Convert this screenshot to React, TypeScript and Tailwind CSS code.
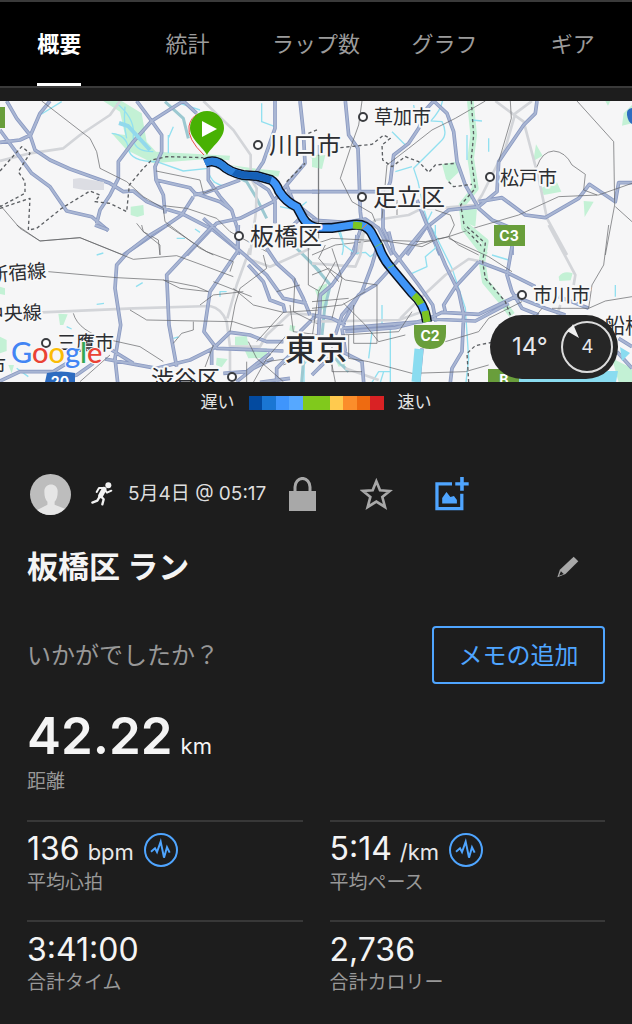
import type { ReactNode } from "react";

interface Tile {
  at: string;
  parks: string;
  banks?: string;
  water: string;
  rivers?: string;
  grey: string;
  roads: string;
  rail: string;
  border: string;
}

interface Place {
  name: string;
  x: number;
  y: number;
  size: number;
  dot?: [number, number];
  rotate?: number;
}

const TABS = ["概要", "統計", "ラップ数", "グラフ", "ギア"];

const PACE_COLORS = [
  "bg-[#034a9f]",
  "bg-[#1a76d3]",
  "bg-[#3f95fc]",
  "bg-[#56a8ff]",
  "bg-[#80c91c]",
  "bg-[#80c91c]",
  "bg-[#ffca4e]",
  "bg-[#fb8d2b]",
  "bg-[#ee6b11]",
  "bg-[#d92224]",
];

const STATS = [
  { value: "136", unit: "bpm", label: "平均心拍", chart: true },
  { value: "5:14", unit: "/km", label: "平均ペース", chart: true },
  { value: "3:41:00", label: "合計タイム" },
  { value: "2,736", label: "合計カロリー" },
];

const TILES: Tile[] = [
  {
    at: "translate(0 -16) scale(0.33333)",
    parks:
      "M310 48H365L425 85 440 170 468 200 690 212 688 226 620 222 460 235 380 195 335 145 375 150 360 80ZM690 240L760 250 840 258 835 275 760 262ZM392 365L430 360 432 390 412 396 392 390ZM930 215L960 208V245Z",
    water:
      "M350 55Q405 100 400 150T460 200M335 145Q380 150 385 190T470 230L550 258 625 250M375 65Q370 120 380 160M505 150V205M520 125L505 160M185 50L120 90M540 55L600 75M785 55V110L825 125M625 260Q640 310 690 300M840 365L890 375 920 350M640 290L670 305",
    rivers: "M495 50L550 100 565 160M640 240L740 290 770 340 800 400",
    grey: "M360 48L330 90 240 150 190 190 90 205 0 228M610 48L700 135 752 210V280L770 310 768 380 750 510",
    roads:
      "M20 48L50 100 90 150 105 195 150 225 210 252 330 295 370 320 400 318 440 350 490 370 550 388 640 435 720 500M150 48L120 85 92 150 60 165 0 172M0 135L95 265 150 305 200 378 275 395 325 437M550 48L455 108 400 170 355 230V280L330 330 300 375 290 415M410 48L455 108 485 150V200L465 245 468 285 490 330 495 385M468 285L570 308 585 325 660 350 695 375 712 430 715 510M550 48L590 85M370 510L545 390 580 335 M580 330L620 322 720 285M560 510L650 415 720 400 820 350 860 300 915 235 910 140 900 48M625 240V285L660 335 695 375M825 48V130L790 230 770 260M760 285L805 315 825 350V415M860 320H960M860 300L880 350 950 405M850 450L900 400",
    rail: "M125 48L270 160 290 200 300 250 380 290 430 335 490 370 495 410 600 490M468 258L600 285 610 325 650 310M0 360L60 430 120 468 240 458 370 510M490 362L560 370 650 400 690 440 800 500M410 415L430 440 475 465 480 510M955 180V410M600 490L640 510",
    border:
      "M0 258L65 185 90 205 55 260 75 290V325L0 365M0 370L90 340 85 435 110 430 185 370 270 318 300 330 285 350 330 355 380 380 388 300 430 250 455 225 500 215 610 218M860 290L915 235M925 145L955 133",
  },
  {
    at: "translate(312 -16) scale(0.33333)",
    parks:
      "M390 238L435 230 440 262 412 288 425 305 402 282ZM672 178L692 212 664 228ZM688 308L735 292 748 320 695 330ZM815 348L845 350 818 396ZM0 215L40 210 30 252 0 246ZM935 85L960 60V115L930 122ZM450 370H495L490 425 455 410ZM880 48H895L888 62Z",
    banks: "M475 48L485 150 476 220 490 310 450 360 458 430 520 510",
    water:
      "M305 60L312 105 390 110Q410 150 385 170L340 215 305 250 318 290 335 370 350 420 380 510M478 105L510 108M530 160V200M465 150V225M355 110Q400 60 390 30M240 140L280 180M250 260L300 245M85 440Q100 480 90 510M360 380L340 420",
    grey: "M550 48L600 85 635 110 680 280 705 400 765 510M660 48L610 85 580 190 510 330 490 360 400 368 330 370 290 390 190 405 150 450 135 510",
    roads:
      "M100 48L110 150 138 190 145 380 150 420 120 510M365 48L345 70 320 130 290 175 245 210 235 290 213 350V430L232 470M365 48L405 85 425 140 435 230 460 300 500 370 540 405 600 430V510M675 48L670 85 635 120 560 230 555 320 500 365 410 375 340 430 285 510M500 350L570 338 640 390 700 398 800 340 832 298 910 350 920 293H960M0 320H240M315 345L345 420 385 510M0 405L100 412 160 402 200 430 240 510",
    rail: "M795 48L905 170 908 360 880 510M520 48L430 100 360 135 290 190 225 240 210 400M150 48L140 120 115 190 85 280 120 350 180 385 190 410M675 245Q690 200 725 198 760 200 780 240L820 268 815 315 855 330M410 455L500 425 620 390 740 335 860 330 960 295M595 48L598 100 560 230M370 375L415 390 427 420 410 455 310 480M20 210V470M0 510L70 480 200 465 340 470 410 455M910 365L960 410M255 345V390M410 455L440 480 500 510",
    border:
      "M85 188L180 178 215 150 235 160 210 180 212 225 240 245 280 215 320 230 350 262 370 240 430 235M410 290L425 305 480 298M478 48L485 150 478 220 490 310 446 360 458 430 520 495",
  },
  {
    at: "translate(0 124) scale(0.33333)",
    parks:
      "M175 266L203 268 190 300H180ZM705 335L740 333 746 360 705 362ZM735 378L800 370 802 398 745 400ZM650 398L683 402 665 427 648 420ZM870 300L886 303 882 322 868 316ZM0 335L20 345V378L0 385ZM25 420H42L35 445ZM0 185L15 190V210L0 207ZM945 195L960 190V235Z",
    water:
      "M290 90L310 84M408 185L428 173M290 238L312 235M520 340L535 336M585 12L600 22M530 40H555M660 215V200H680M200 305L215 312M50 430L85 455M912 472V420L925 400",
    rivers: "M885 65L960 140M905 472L912 390",
    grey: "M125 262L400 250 630 243Q665 250 680 290L690 365V440M750 70L710 180 682 280M690 365H780L800 330 870 265 950 270M740 100L810 125 900 85 930 70",
    roads:
      "M500 0L450 30 385 80 350 120 345 190 362 300 345 400 353 472M640 0L500 150 507 300 530 425M610 -20L660 25 740 95 800 150 850 220 920 235M715 0L712 80 630 200 612 320 650 370 780 375 850 378M0 468L60 440 160 440 200 415M150 472L230 450 280 415 M315 402L470 430 570 405 640 370 690 322 750 330 800 350H850M335 375L400 415M635 420V370M670 445L740 440 810 385M800 70L830 115 880 160 910 220 930 270M745 120L790 170 810 225 850 240 855 262M710 470L760 430 820 400M830 472V430L870 390M900 320L950 270M780 472L870 460M285 0L325 15",
    rail: "M145 140L350 158 490 165 590 185 625 200M50 0L120 48 240 38 400 103 530 92 620 125 700 155M390 255L440 285 700 290M220 265Q235 320 330 345L420 365 490 410M500 0L560 40 620 80 700 110 690 140M690 320L705 240 720 190 800 130 790 90M580 290V315L545 325 520 355M700 190L760 240 850 262 960 255M600 240L640 210 730 200M240 470L330 390M870 240L880 320 960 330M760 472L800 400 860 330M745 350L770 400 850 470M885 160L880 260 960 300M480 90V60L430 20 425 0M640 170L755 215M850 262L770 350M700 290L760 310 850 300M830 200L900 180M490 165L540 190 625 200M640 360L610 440M800 410L870 400M925 60V180L960 200M740 410V472M850 420L940 380",
    border: "",
  },
  {
    at: "translate(312 124) scale(0.33333)",
    parks:
      "M740 155Q755 135 782 145L776 166 742 168ZM20 185L45 175 48 240 20 262ZM900 400L960 430V472H920ZM66 395L85 385 100 420 80 425Z",
    banks: "M460 0L520 50 510 110 520 170 570 230 600 270",
    water:
      "M360 10L420 130 460 250 470 400 462 472M80 20L95 60 130 85 160 82 175 95 200 75 210 60M300 145L345 125 340 95 370 70V0M910 180V215M180 472L200 440H235M170 400L180 320M210 240V300M205 472L215 440M235 472V300M540 90L590 105",
    rivers: "M0 115L55 180 38 250 30 330M70 400L110 440",
    grey: "M710 0L790 150 785 180M265 280L330 215 400 150 470 102 510 110 660 180M0 290L260 285 330 260M155 20L145 90 130 125 0 115M745 240L735 270M100 430L200 465",
    roads:
      "M135 30L130 80 60 180 25 210 20 330M345 0L250 115 190 180 140 210 90 300M200 50L180 120 150 200 90 270 70 330M230 20L245 80 320 180 362 240 372 290M90 310L330 290 390 262 500 268 590 225 620 210M100 320L250 308 350 282 490 288 590 235M350 0L400 120 440 200 455 270 450 380 420 430 415 472M500 110L430 185 395 240 400 260M500 110L580 140 670 185M600 65L585 150 600 200 630 250 680 270M610 215L700 250 760 270M740 215L830 250M920 340L960 365M330 370L320 472M0 450L40 410 90 370M90 380L150 410 155 472M0 270L60 280 100 300M90 310L100 380M915 380L960 430",
    rail: "M890 0L875 120 840 180 830 250 720 250M830 250L880 228 960 215M0 60L60 40 220 48 330 65 380 40M95 235L160 300 200 350 280 330M125 240V355H195V180L100 165M400 350L500 320 530 280 630 230M170 410L300 445 460 440 530 420M690 250L650 300M0 250L90 240 160 200M0 230L110 220M60 70L90 160 60 280M110 330V400L170 410M0 340L20 200 70 110M0 150L50 130 100 165M90 330L260 320 300 260M410 40L530 95 600 140M40 60L20 100 80 170M0 400L60 420 70 472M60 350V440L150 440",
    border: "M465 5L520 55 512 110 520 160 580 230 595 270M470 472L465 385 490 362 540 352",
  },
];

const PLACES: Place[] = [
  { name: "川口市", x: 269, y: 53, size: 24, dot: [258, 44] },
  { name: "草加市", x: 374, y: 23, size: 19, dot: [363, 16] },
  { name: "足立区", x: 373, y: 105, size: 24, dot: [362, 96] },
  { name: "松戸市", x: 500, y: 84, size: 19, dot: [490, 76] },
  { name: "板橋区", x: 250, y: 144, size: 24, dot: [239, 135] },
  { name: "新宿線", x: -10, y: 181, size: 19, rotate: -5 },
  { name: "中央線", x: -15, y: 220, size: 19, rotate: -2 },
  { name: "三鷹市", x: 57, y: 249, size: 19, dot: [46, 242] },
  { name: "市", x: -13, y: 272, size: 19 },
  { name: "渋谷区", x: 151, y: 286, size: 23, dot: [232, 276] },
  { name: "東京", x: 285, y: 259, size: 31 },
  { name: "市川市", x: 533, y: 201, size: 19, dot: [522, 194] },
  { name: "船橋市", x: 604, y: 232, size: 21 },
];

const ROUTE =
  "M205 62Q214 58 222 64 229 71 243 74L257 75 271 79Q276 82 279 90 286 101 297 106L303 117Q308 126 319 127L332 127 352 124Q365 122 371 131L379 146Q383 158 392 168L412 192Q425 203 427 221";

function RouteMap() {
  return (
    <svg
      viewBox="0 0 632 281"
      preserveAspectRatio="xMidYMid slice"
      className="block h-full w-full bg-[#f6f6f7]"
      role="img"
      aria-label="ルート"
      fill="none"
    >
      {TILES.map((t) => (
        <g key={t.at} transform={t.at} strokeLinejoin="round">
          <path d={t.parks} fill="#c3f1d5" />
          {t.banks && <path d={t.banks} stroke="#c3f1d5" strokeWidth="20" />}
          <path d={t.water} stroke="#92e0f0" strokeWidth="4" />
          {t.rivers && <path d={t.rivers} stroke="#9cc9d1" strokeWidth="9" />}
          <path d={t.grey} stroke="#d3d5d9" strokeWidth="8" />
          <path d={t.roads} stroke="#8b9ac2" strokeWidth="11" />
          <path d={t.roads} stroke="#a9b6d3" strokeWidth="6" />
          <path d={t.rail} stroke="#5c5d61" strokeWidth="2" />
          <path d={t.border} stroke="#5c5f63" strokeWidth="4" strokeDasharray="10 8" />
        </g>
      ))}

      <path d="M73 78L80 77 104 81V89L84 89 73 87Z" fill="#dcdde3" />
      <path d="M119 22L128 25 140 38 150 49" stroke="#92d9ec" strokeWidth="4" />
      <path d="M419 248L416 281" stroke="#8adcf0" strokeWidth="9" />
      <path d="M519 270H618L616 281H519ZM620 246L630 252 622 260Z" fill="#8adcf0" />

      <path d={ROUTE} stroke="#0b1220" strokeWidth="10" />
      <path d={ROUTE} stroke="#3f95f8" strokeWidth="7" />
      <path d="M205 62Q214 58 222 64 229 71 243 74" stroke="#2c80dc" strokeWidth="7" />
      <path d="M234 71Q238 74 257 75L271 79" stroke="#1560b8" strokeWidth="7" />
      <path d="M353 124L362 125M414 194Q419 199 421 203M425 210L427 221" stroke="#7cc522" strokeWidth="7" />
      <path d="M362 128L367 123" stroke="#d98a3a" strokeWidth="1" />
      <path d="M375 146L382 142M388 167L394 164" stroke="#6fbf5a" strokeWidth="1" />

      {PLACES.map((p) => (
        <g key={p.name}>
          {p.dot && (
            <circle cx={p.dot[0]} cy={p.dot[1]} r="4" fill="#fff" stroke="#3a3c40" strokeWidth="2" />
          )}
          <text
            x={p.x}
            y={p.y}
            fontSize={p.size}
            transform={p.rotate ? `rotate(${p.rotate} ${p.x} ${p.y})` : undefined}
            fontWeight={p.size > 30 ? 500 : 400}
            fill="#2b2d31"
            stroke="#f8f8f8"
            strokeWidth="4"
            strokeLinejoin="round"
            paintOrder="stroke"
          >
            {p.name}
          </text>
        </g>
      ))}

      {/* route shields */}
      <path
        d="M0 6H5V27H0ZM494 124H525V145H494ZM414 224H446V232Q446 248 430 248 414 248 414 232ZM488 268H519V281H488Z"
        fill="#699e3b"
      />
      <path d="M47 272Q61 269 75 272V281H45Z" fill="#2e6cc0" />
      <path d="M632 7Q626 8 627 14 628 21 632 23Z" fill="#2e6cc0" />
      <g fill="#fff" fontSize="14" fontWeight="700" textAnchor="middle">
        <text x="509" y="140">C3</text>
        <text x="430" y="240">C2</text>
        <text x="504" y="284">B</text>
        <text x="60" y="286">20</text>
      </g>

      {/* start pin */}
      <path d="M204 54Q187 38 189 25 191 16 198 13" stroke="#ec4a4a" strokeWidth="1" />
      <path
        d="M207 54C203 46 190 38 190 27A17 17 0 0 1 224 27C224 38 211 46 207 54Z"
        fill="#48b103"
      />
      <path d="M202 20L217 28 202 36Z" fill="#fff" />

      <text x="11" y="262" fontSize="29" fontFamily="Lato, sans-serif" fontWeight="500" stroke="#f8f8f8" strokeWidth="2" paintOrder="stroke">
        <tspan fill="#4285f4">G</tspan>
        <tspan fill="#ea4335">o</tspan>
        <tspan fill="#fbbc05">o</tspan>
        <tspan fill="#4285f4">g</tspan>
        <tspan fill="#34a853">l</tspan>
        <tspan fill="#ea4335">e</tspan>
      </text>
    </svg>
  );
}

function WeatherBadge() {
  return (
    <div className="absolute right-3.5 bottom-[3px] flex h-16 w-32 items-center justify-between rounded-full bg-[#262626] pr-1 pl-[22px]">
      <span className="text-2xl text-gray-200">14°</span>
      <div className="relative flex size-[53px] items-center justify-center text-[19px] text-gray-200">
        <svg viewBox="0 0 53 53" className="absolute inset-0" fill="none">
          <circle cx="26" cy="26" r="25" stroke="#dcdcdc" strokeWidth="2" />
          <path d="M6 10L18 17 12 3Q10 8 6 10Z" fill="#f0f0f0" />
        </svg>
        <span>4</span>
      </div>
    </div>
  );
}

function WaveIcon() {
  return (
    <svg viewBox="0 0 102 102" className="size-[34px]" fill="none" stroke="#4fa5ff">
      <circle cx="51" cy="51" r="48" strokeWidth="6" />
      <path d="M21 56L33 46 39 57 50 26 60 74 69 43 77 59" strokeWidth="6" />
    </svg>
  );
}

function RunnerIcon() {
  return (
    <svg
      viewBox="0 0 70 78"
      className="h-[26px] w-6"
      fill="none"
      stroke="#f2f2f2"
      strokeWidth="7"
      strokeLinejoin="round"
      strokeLinecap="round"
    >
      <circle cx="54" cy="13" r="9" fill="#f2f2f2" stroke="none" />
      <path d="M41 25L31 44" strokeWidth="15" />
      <path d="M38 21L26 21 19 33M43 26L50 35 63 29" strokeWidth="6" />
      <path d="M31 45L40 55 36 70M28 47L21 59 6 65" />
    </svg>
  );
}

function Value({ children }: { children: ReactNode }) {
  return <span className="text-[32px] leading-9 text-[#f4f4f4]">{children}</span>;
}

export default function App() {
  return (
    <div
      lang="ja"
      className="min-h-screen overflow-hidden bg-[#1d1d1d] font-['Inter','Noto_Sans_CJK_JP',sans-serif] text-[#f4f4f4]"
    >
      <nav className="border-y-2 border-[#3a3a3a] bg-black">
        <div className="-mx-[5px] grid grid-cols-5">
          {TABS.map((tab, i) => (
            <a
              key={tab}
              href="#"
              aria-current={i === 0 ? "page" : undefined}
              className={
                i === 0
                  ? "mx-auto flex h-[84px] items-center border-b-3 border-white pt-[3px] text-[22px] font-bold text-white"
                  : "mx-auto flex h-[84px] items-center text-[22px] text-[#9b9b9b]"
              }
            >
              {tab}
            </a>
          ))}
        </div>
      </nav>

      <section className="relative mt-[13px] h-[281px]">
        <RouteMap />
        <WeatherBadge />
      </section>

      <div className="flex h-10 items-center justify-center gap-3.5 pt-0.5 text-[17px] text-[#e4e4e4]">
        <span>遅い</span>
        <div className="flex h-[14px] w-[135px]">
          {PACE_COLORS.map((color, i) => (
            <div key={i} className={`flex-1 ${color}`} />
          ))}
        </div>
        <span>速い</span>
      </div>

      <main className="px-[27px]">
        <div className="mt-12 flex h-12 items-center">
          <svg viewBox="0 0 40 40" className="ml-[3px] size-[41px]">
            <circle cx="20" cy="20" r="20" fill="#bdbdbd" />
            <path
              d="M14 17C14 8 27 8 27 17 27 22 26 25 24 27V30L34 34Q28 40 20 40 12 40 7 35L17 30V27C15 25 14 22 14 17Z"
              fill="#e6e6e6"
            />
          </svg>
          <div className="ml-[19px]">
            <RunnerIcon />
          </div>
          <span className="ml-3.5 text-[19px] text-[#dedede]">5月4日 @ 05:17</span>
          <button aria-label="公開設定" className="ml-[23px]">
            <svg viewBox="0 0 27 34" className="h-[34px] w-[27px]">
              <path d="M6 15V10A7 8 0 0 1 21 10V15" fill="none" stroke="#a8a8a8" strokeWidth="3" />
              <path d="M0 14H27V34H0Z" fill="#a8a8a8" />
            </svg>
          </button>
          <button aria-label="お気に入り" className="ml-11">
            <svg viewBox="0 0 99 99" className="size-[33px]">
              <path
                d="M49 10L60 37 89 39 67 57 75 87 49 71 23 87 31 57 9 39 38 37Z"
                fill="none"
                stroke="#a8a8a8"
                strokeWidth="8"
              />
            </svg>
          </button>
          <button aria-label="写真を追加" className="ml-[42px]">
            <svg viewBox="0 0 102 104" className="h-[34px] w-[34px]" fill="#4fa5ff">
              <path d="M0 16H51V26H10V92H76V51H86V102H0ZM76 0H87V16H102V26H87V42H76V26H61V16H76Z" />
              <path d="M21 64L34 46 46 61 57 58 66 70V81H21Z" />
            </svg>
          </button>
        </div>

        <div className="mt-6 flex h-[50px] items-center justify-between pr-[26px]">
          <h1 className="text-[31px] font-bold">板橋区 ラン</h1>
          <button aria-label="タイトルを編集">
            <svg viewBox="0 0 62 62" className="size-[22px]">
              <path d="M47 2L60 15 24 51 1 60 8 39Z" fill="#a8a8a8" />
              <path d="M11 43L19 51 6 56Z" fill="#1d1d1d" />
            </svg>
          </button>
        </div>

        <div className="mt-[34px] flex h-[58px] items-center justify-between">
          <p className="pt-0.5 text-[24px] text-[#989898]">いかがでしたか？</p>
          <button className="h-[58px] w-[173px] rounded border-2 border-[#4fa5ff] pt-0.5 text-[24px] text-[#4fa5ff]">
            メモの追加
          </button>
        </div>

        <div className="mt-6 h-28">
          <div className="flex items-baseline gap-2">
            <span className="text-[51px] leading-[56px] font-semibold">42.22</span>
            <span className="text-[22px]">km</span>
          </div>
          <p className="mt-1 text-[19px] leading-7 text-[#989898]">距離</p>
        </div>

        <dl className="grid grid-cols-2 gap-x-[27px]">
          {STATS.map((s) => (
            <div key={s.label} className="flex h-[100px] flex-col-reverse justify-end border-t-2 border-[#383838] pt-2.5">
              <dt className="mt-px text-[19px] leading-7 text-[#989898]">{s.label}</dt>
              <dd className="flex h-9 items-center gap-2.5">
                <div className="flex items-baseline gap-2">
                  <Value>{s.value}</Value>
                  {s.unit && <span className="text-[22px] text-[#e8e8e8]">{s.unit}</span>}
                </div>
                {s.chart && <WaveIcon />}
              </dd>
            </div>
          ))}
        </dl>
      </main>
    </div>
  );
}
